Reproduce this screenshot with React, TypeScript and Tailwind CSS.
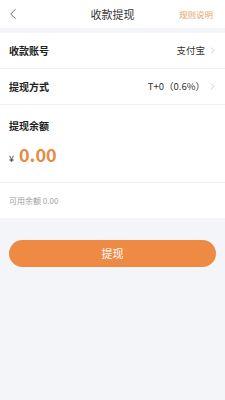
import { ChevronLeft, ChevronRight } from "lucide-react";

const font = { fontFamily: '"Noto Sans CJK SC", "Noto Sans", sans-serif' };

function Row({ label, value }: { label: string; value: string }) {
  return (
    <div className="h-[36px] flex items-center justify-between pl-[9px] pr-[7px] border-b border-[#f0f0f0]">
      <span className="text-[10px] font-bold text-[#222]">{label}</span>
      <div className="flex items-center gap-[2px]">
        <span className="text-[9.5px] text-[#333]">{value}</span>
        <ChevronRight className="w-[11px] h-[11px] text-[#b0b0b0]" strokeWidth={1.3} />
      </div>
    </div>
  );
}

export default function App() {
  return (
    <div className="w-[225px] h-[400px] bg-[#f4f5f9] flex flex-col" style={font}>
      <div className="h-[28px] bg-white flex items-center justify-between pl-[4px] relative">
        <ChevronLeft className="w-[18px] h-[18px] text-[#666]" strokeWidth={1.3} />
        <span className="absolute left-0 right-0 text-center text-[11px] text-[#333] pointer-events-none">收款提现</span>
        <span className="text-[8.5px] text-[#e2a467] pr-[12px]">规则说明</span>
      </div>
      <div className="mt-[5px] bg-white flex flex-col">
        <Row label="收款账号" value="支付宝" />
        <Row label="提现方式" value="T+0（0.6%）" />
        <div className="pt-[13px] pl-[9px] border-b border-[#f0f0f0] h-[78px] flex flex-col">
          <span className="text-[10px] font-bold text-[#222]">提现余额</span>
          <div className="flex items-baseline gap-[5px] mt-[12px]">
            <span className="text-[9px] text-[#333]">¥</span>
            <span className="text-[18px] font-bold text-[#e88a43] leading-none">0.00</span>
          </div>
        </div>
        <div className="h-[35px] flex items-center pl-[9px]">
          <span className="text-[8px] text-[#a0a0a0]">可用余额 0.00</span>
        </div>
      </div>
      <div className="px-[9px] mt-[21px]">
        <button className="w-full h-[27px] rounded-full bg-[#ee8a43] text-white text-[11px]">提现</button>
      </div>
    </div>
  );
}
